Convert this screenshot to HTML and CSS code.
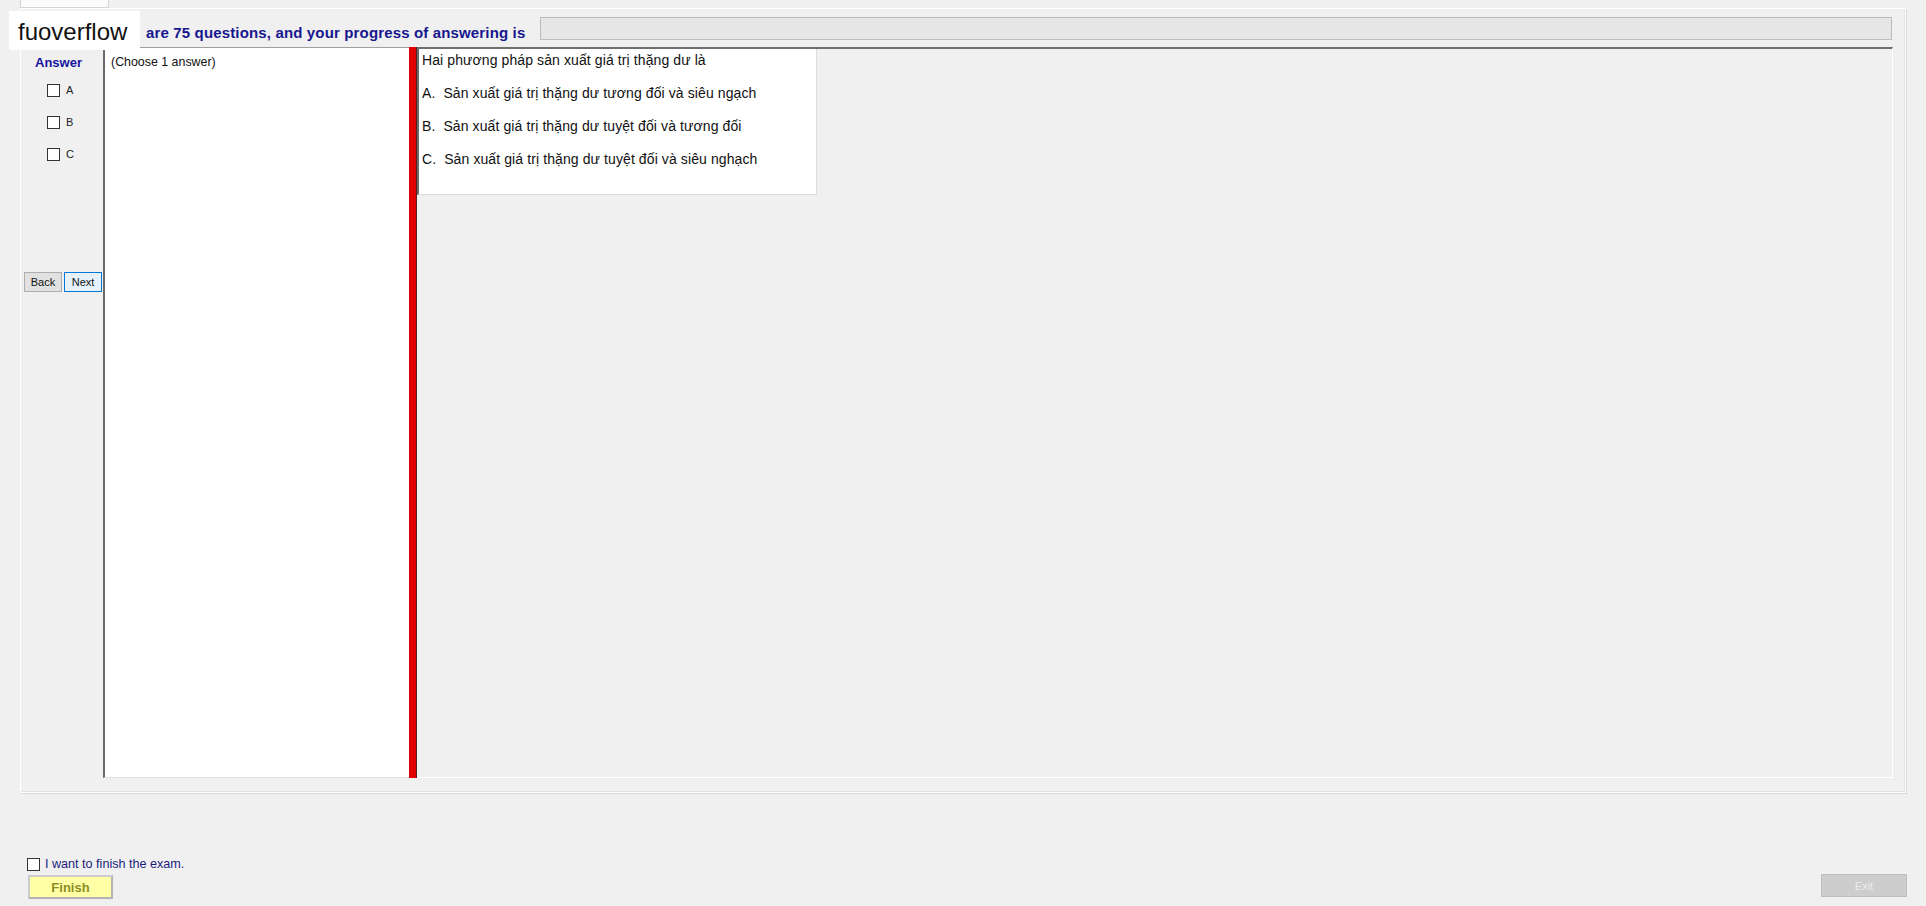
FILE: index.html
```html
<!DOCTYPE html>
<html>
<head>
    <title>Exam</title>
    <link rel="stylesheet" href="styles.css">
</head>
<body>
    <div class="tabs">
        <div class="tab"></div>
    </div>

    <div class="frame">
        <div class="status">
            <span class="status-text">are 75 questions, and your progress of answering is</span>
            <div class="progress"></div>
        </div>

        <div class="exam">
            <div class="answers">
                <div class="answers-title">Answer</div>
                <label class="option"><input type="checkbox" class="box"> A</label>
                <label class="option"><input type="checkbox" class="box"> B</label>
                <label class="option"><input type="checkbox" class="box"> C</label>
                <div class="nav">
                    <button class="btn">Back</button>
                    <button class="btn btn-active">Next</button>
                </div>
            </div>

            <div class="choose">(Choose 1 answer)</div>

            <div class="splitter"></div>

            <div class="question-area">
                <div class="question">
                    <div class="q-line">Hai phương pháp sản xuất giá trị thặng dư là</div>
                    <div class="q-line">A.&nbsp; Sản xuất giá trị thặng dư tương đối và siêu ngạch</div>
                    <div class="q-line">B.&nbsp; Sản xuất giá trị thặng dư tuyệt đối và tương đối</div>
                    <div class="q-line">C.&nbsp; Sản xuất giá trị thặng dư tuyệt đối và siêu nghạch</div>
                </div>
            </div>
        </div>
    </div>

    <div class="footer">
        <div class="finish-block">
            <label class="finish-check"><input type="checkbox" class="box"> I want to finish the exam.</label>
            <button class="finish">Finish</button>
        </div>
        <button class="exit" disabled>Exit</button>
    </div>

    <div class="brand">fuoverflow</div>
</body>
</html>
```

FILE: styles.css
```css
body {
    margin: 0;
    height: 906px;
    overflow: hidden;
    background-color: #f0f0f0;
    font-family: "Liberation Sans", Arial, sans-serif;
    display: flex;
    flex-direction: column;
}
.tabs {
    height: 8px;
    padding-left: 20px;
}
.tab {
    width: 89px;
    height: 8px;
    background: #fbfbfb;
    border: 1px solid #d4d4d4;
    border-top: none;
    box-sizing: border-box;
}
.frame {
    margin: 0 20px 0 20px;
    height: 785px;
    box-sizing: border-box;
    border: 1px solid #fff;
    box-shadow: 1px 1px 0 #dadada, inset -1px -1px 0 #e2e2e2;
}
.status {
    display: flex;
    align-items: flex-start;
    margin: 8px 13px 0 125px;
    height: 23px;
}
.status-text {
    margin-top: 8px;
    font-size: 15px;
    line-height: 16px;
    letter-spacing: 0.15px;
    font-weight: bold;
    color: #17178f;
    white-space: nowrap;
}
.progress {
    flex: 1;
    height: 23px;
    margin-left: 15px;
    box-sizing: border-box;
    background: #e6e6e6;
    border: 1px solid #bcbcbc;
}
.exam {
    display: grid;
    grid-template-columns: 80px 306px 8px 1fr;
    height: 731px;
    margin: 7px 12px 0 2px;
}
.answers {
    display: flex;
    flex-direction: column;
    padding-top: 8px;
}
.answers-title {
    padding-left: 12px;
    font-size: 13px;
    line-height: 15px;
    font-weight: bold;
    color: #1515a0;
}
.option {
    display: flex;
    align-items: center;
    height: 32px;
    margin-left: 24px;
    font-size: 11px;
    color: #222;
}
.option:first-of-type {
    margin-top: 4px;
}
.box {
    appearance: none;
    width: 13px;
    height: 13px;
    margin: 0 6px 0 0;
    background: #fff;
    border: 1px solid #333;
    box-sizing: border-box;
}
.nav {
    display: flex;
    gap: 2px;
    margin: 102px 0 0 1px;
}
.btn {
    width: 38px;
    height: 20px;
    padding: 0;
    font-family: "Liberation Sans", Arial, sans-serif;
    font-size: 11px;
    color: #111;
    background: #e1e1e1;
    border: 1px solid #adadad;
}
.btn-active {
    background: #e5f1fb;
    border-color: #0078d7;
}
.choose {
    background: #fff;
    border-left: 2px solid #6a6a6a;
    border-top: 1px solid #a0a0a0;
    border-bottom: 1px solid #e2e2e2;
    padding: 7px 6px;
    font-size: 12.4px;
    line-height: 14px;
    color: #111;
}
.splitter {
    background: #e00000;
    border-right: 1px solid #5a2020;
}
.question-area {
    border-top: 2px solid #6e6e6e;
    border-right: 1px solid #fff;
    border-bottom: 1px solid #fff;
}
.question {
    width: 400px;
    height: 146px;
    box-sizing: border-box;
    background: #fff;
    border-left: 2px solid #6a6a6a;
    border-right: 1px solid #dcdcdc;
    border-bottom: 1px solid #dcdcdc;
    padding: 2px 0 0 3px;
}
.q-line {
    font-size: 14px;
    line-height: 18px;
    letter-spacing: 0.1px;
    color: #111;
    white-space: nowrap;
}
.q-line + .q-line {
    margin-top: 15px;
}
.footer {
    flex: 1;
    display: flex;
    justify-content: space-between;
    align-items: flex-end;
    padding: 0 19px 7px 27px;
}
.finish-block {
    display: flex;
    flex-direction: column;
}
.finish-check {
    display: flex;
    align-items: center;
    font-size: 12.6px;
    line-height: 13px;
    color: #1c1c7c;
}
.finish-check .box {
    margin-right: 5px;
}
.finish {
    width: 85px;
    height: 24px;
    margin: 4px 0 0 1px;
    padding: 0;
    background: #ffffa6;
    border: 2px solid #cccccc;
    border-right-color: #b4b4b4;
    border-bottom-color: #b4b4b4;
    font-family: "Liberation Sans", Arial, sans-serif;
    font-size: 13px;
    font-weight: bold;
    color: #8c8c24;
}
.exit {
    width: 86px;
    height: 23px;
    margin-bottom: 2px;
    padding: 0;
    background: #cdcdcd;
    border: 1px solid #bdbdbd;
    font-family: "Liberation Sans", Arial, sans-serif;
    font-size: 11px;
    color: #ececec;
}
.brand {
    position: absolute;
    left: 9px;
    top: 11px;
    width: 131px;
    height: 39px;
    padding: 3px 0 0 9px;
    box-sizing: border-box;
    background: #fff;
    font-size: 24px;
    line-height: 36px;
    color: #111;
}
```
